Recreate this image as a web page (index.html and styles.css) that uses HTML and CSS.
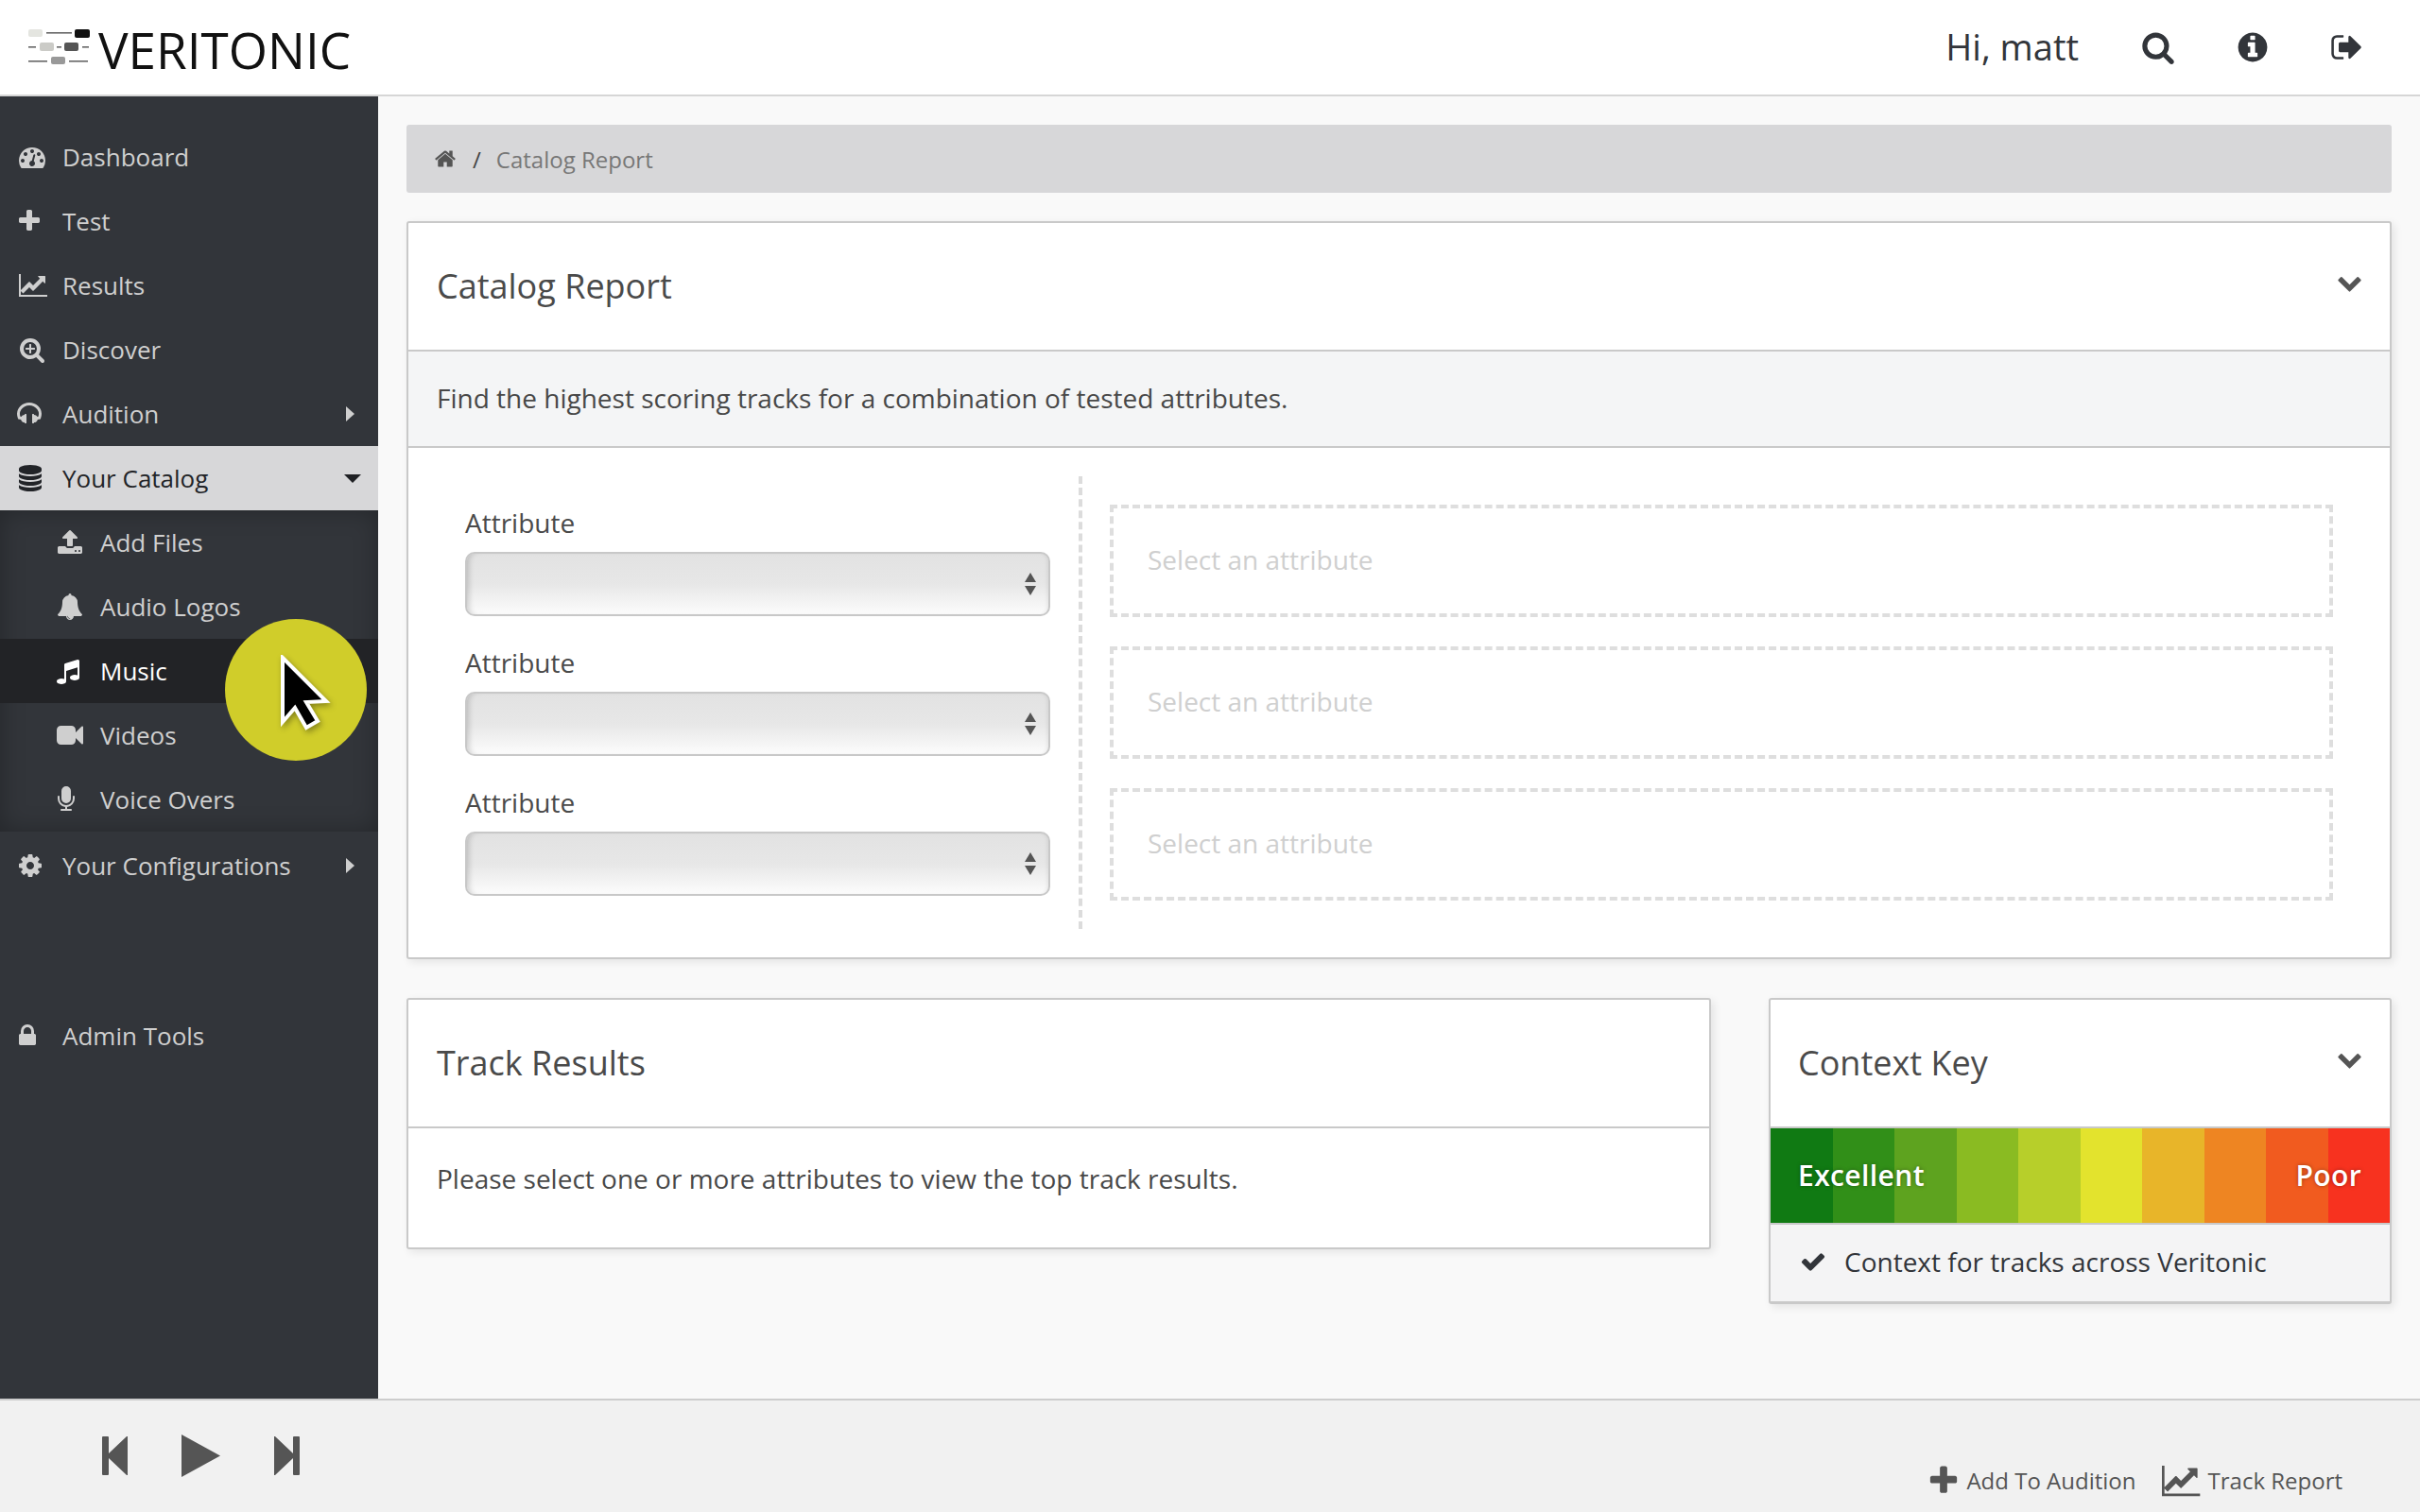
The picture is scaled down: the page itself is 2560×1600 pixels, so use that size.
FILE: index.html
```
<!DOCTYPE html>
<html lang="en">
<head>
<meta charset="utf-8">
<title>Veritonic - Catalog Report</title>
<link rel="stylesheet" href="styles.css">
</head>
<body>
<svg class="sprite" xmlns="http://www.w3.org/2000/svg">
<symbol id="i-plus" viewBox="0 0 1792 1792"><path d="M1600 736v192q0 40-28 68t-68 28h-416v416q0 40-28 68t-68 28h-192q-40 0-68-28t-28-68v-416h-416q-40 0-68-28t-28-68v-192q0-40 28-68t68-28h416v-416q0-40 28-68t68-28h192q40 0 68 28t28 68v416h416q40 0 68 28t28 68z"/></symbol>
<symbol id="i-search" viewBox="0 0 1792 1792"><path d="M1216 832q0-185-131.500-316.500t-316.500-131.500-316.500 131.500-131.500 316.500 131.500 316.500 316.500 131.500 316.500-131.500 131.500-316.500zm512 832q0 52-38 90t-90 38q-54 0-90-38l-343-342q-179 124-399 124-143 0-273.500-55.500t-225-150-150-225-55.500-273.500 55.500-273.500 150-225 225-150 273.500-55.500 273.500 55.500 225 150 150 225 55.500 273.500q0 220-124 399l343 343q37 37 37 90z"/></symbol>
<symbol id="i-check" viewBox="0 0 1792 1792"><path d="M1671 566q0 40-28 68l-724 724-136 136q-28 28-68 28t-68-28l-136-136-362-362q-28-28-28-68t28-68l136-136q28-28 68-28t68 28l294 295 656-657q28-28 68-28t68 28l136 136q28 28 28 68z"/></symbol>
<symbol id="i-chevron" viewBox="0 0 1792 1792"><path d="M1683 808l-742 741q-19 19-45 19t-45-19l-742-741q-19-19-19-45.500t19-45.500l166-165q19-19 45-19t45 19l531 531 531-531q19-19 45-19t45 19l166 165q19 19 19 45.500t-19 45.500z"/></symbol>
<symbol id="i-info" viewBox="0 0 1792 1792"><path d="M1152 1376v-160q0-14-9-23t-23-9h-96v-512q0-14-9-23t-23-9h-320q-14 0-23 9t-9 23v160q0 14 9 23t23 9h96v320h-96q-14 0-23 9t-9 23v160q0 14 9 23t23 9h448q14 0 23-9t9-23zm-128-896v-160q0-14-9-23t-23-9h-192q-14 0-23 9t-9 23v160q0 14 9 23t23 9h192q14 0 23-9t9-23zm640 416q0 209-103 385.500t-279.500 279.500-385.500 103-385.500-103-279.500-279.500-103-385.500 103-385.500 279.500-279.500 385.500-103 385.500 103 279.500 279.500 103 385.500z"/></symbol>
<symbol id="i-signout" viewBox="0 0 1792 1792"><path d="M704 1440q0 4 1 20t.5 26.500-3 23.500-10 19.500-20.500 6.500h-320q-119 0-203.500-84.500t-84.500-203.500v-704q0-119 84.500-203.500t203.500-84.500h320q13 0 22.500 9.500t9.500 22.500q0 4 1 20t.5 26.500-3 23.500-10 19.500-20.500 6.500h-320q-66 0-113 47t-47 113v704q0 66 47 113t113 47h312l11.500 1 11.500 3 8 5.500 7 9 2 13.500zm928-544q0 26-19 45l-544 544q-19 19-45 19t-45-19-19-45v-288h-448q-26 0-45-19t-19-45v-384q0-26 19-45t45-19h448v-288q0-26 19-45t45-19 45 19l544 544q19 19 19 45z"/></symbol>
<symbol id="i-home" viewBox="0 0 1792 1792"><path d="M1472 992v480q0 26-19 45t-45 19h-384v-384h-256v384h-384q-26 0-45-19t-19-45v-480q0-1 .5-3t.5-3l575-474 575 474q1 2 1 6zm223-69l-62 74q-8 9-21 11h-3q-13 0-21-7l-692-577-692 577q-12 8-24 7-13-2-21-11l-62-74q-8-10-7-23.500t11-21.500l719-599q32-26 76-26t76 26l244 204v-195q0-14 9-23t23-9h192q14 0 23 9t9 23v408l219 182q10 8 11 21.500t-7 23.500z"/></symbol>
<symbol id="i-chart" viewBox="0 0 2048 1792"><path d="M1920 1536v128h-1920v-1536h128v1408h1792zm-128-1248v435q0 21-19.500 29.500t-35.500-7.500l-121-121-633 633q-10 10-23 10t-23-10l-233-233-416 416-192-192 585-585q10-10 23-10t23 10l233 233 464-464-121-121q-16-16-7.500-35.500t29.500-19.500h435q14 0 23 9t9 23z"/></symbol>
<symbol id="i-db" viewBox="0 0 1792 1792"><path d="M896 768q237 0 443-43t325-127v170q0 69-103 128t-280 93.500-385 34.500-385-34.500-280-93.500-103-128v-170q119 84 325 127t443 43zm0 768q237 0 443-43t325-127v170q0 69-103 128t-280 93.500-385 34.500-385-34.500-280-93.500-103-128v-170q119 84 325 127t443 43zm0-384q237 0 443-43t325-127v170q0 69-103 128t-280 93.500-385 34.500-385-34.500-280-93.500-103-128v-170q119 84 325 127t443 43zm0-1152q208 0 385 34.500t280 93.500 103 128v128q0 69-103 128t-280 93.500-385 34.500-385-34.500-280-93.500-103-128v-128q0-69 103-128t280-93.500 385-34.500z"/></symbol>
<symbol id="i-video" viewBox="0 0 1792 1792"><path d="M1792 352v1088q0 42-39 59-13 5-25 5-27 0-45-19l-403-403v166q0 119-84.500 203.500t-203.500 84.500h-704q-119 0-203.500-84.500t-84.500-203.500v-704q0-119 84.500-203.500t203.500-84.500h704q119 0 203.500 84.500t84.500 203.500v165l403-402q18-19 45-19 12 0 25 5 39 17 39 59z"/></symbol>
<symbol id="i-lock" viewBox="0 0 1792 1792"><path d="M640 768h512v-192q0-106-75-181t-181-75-181 75-75 181v192zm832 96v576q0 40-28 68t-68 28h-960q-40 0-68-28t-28-68v-576q0-40 28-68t68-28h32v-192q0-184 132-316t316-132 316 132 132 316v192h32q40 0 68 28t28 68z"/></symbol>
<symbol id="i-bell" viewBox="0 0 1792 1792"><path d="M912 1696q0-16-16-16-59 0-101.500-42.500t-42.500-101.500q0-16-16-16t-16 16q0 73 51.500 124.500t124.500 51.500q16 0 16-16zm816-288q0 52-38 90t-90 38h-448q0 106-75 181t-181 75-181-75-75-181h-448q-52 0-90-38t-38-90q50-42 91-88t85-119.500 74.500-158.500 50-206 19.500-260q0-152 117-282.500t307-158.500q-8-19-8-39 0-40 28-68t68-28 68 28 28 68q0 20-8 39 190 28 307 158.500t117 282.500q0 139 19.500 260t50 206 74.500 158.500 85 119.500 91 88z"/></symbol>
<symbol id="i-music" viewBox="0 0 1792 1792"><path d="M1664 224v1120q0 50-34 89t-86 60.500-103.500 32-96.500 10.500-96.500-10.500-103.500-32-86-60.500-34-89 34-89 86-60.500 103.500-32 96.500-10.500q105 0 192 39v-537l-768 237v709q0 50-34 89t-86 60.500-103.500 32-96.500 10.500-96.500-10.500-103.500-32-86-60.500-34-89 34-89 86-60.500 103.500-32 96.500-10.500q105 0 192 39v-967q0-31 19-56.500t49-35.500l832-256q12-4 28-4 40 0 68 28t28 68z"/></symbol>
<symbol id="i-upload" viewBox="0 0 1792 1792"><path d="M1344 1472q0-26-19-45t-45-19-45 19-19 45 19 45 45 19 45-19 19-45zm256 0q0-26-19-45t-45-19-45 19-19 45 19 45 45 19 45-19 19-45zm128-224v320q0 40-28 68t-68 28h-1472q-40 0-68-28t-28-68v-320q0-40 28-68t68-28h427q21 56 70.500 92t110.500 36h256q61 0 110.500-36t70.500-92h427q40 0 68 28t28 68zm-325-648q-17 40-59 40h-256v448q0 26-19 45t-45 19h-256q-26 0-45-19t-19-45v-448h-256q-42 0-59-40-17-39 14-69l448-448q18-19 45-19t45 19l448 448q31 30 14 69z"/></symbol>
<symbol id="i-headphones" viewBox="0 0 1792 1792"><path d="M1664 886q0 166-60 314l-20 49-185 33q-22 83-90.500 136.500t-156.500 53.500v32q0 14-9 23t-23 9h-64q-14 0-23-9t-9-23v-576q0-14 9-23t23-9h64q14 0 23 9t9 23v32q71 0 130 35.500t93 95.500l68-12q29-95 29-193 0-148-88-279t-236.500-209-315.500-78-315.500 78-236.500 209-88 279q0 98 29 193l68 12q34-60 93-95.500t130-35.500v-32q0-14 9-23t23-9h64q14 0 23 9t9 23v576q0 14-9 23t-23 9h-64q-14 0-23-9t-9-23v-32q-88 0-156.500-53.500t-90.500-136.500l-185-33-20-49q-60-148-60-314 0-151 67-291t179-242.500 266-163.500 320-61 320 61 266 163.500 179 242.500 67 291z"/></symbol>
<symbol id="i-cog" viewBox="0 0 1792 1792"><path d="M1152 896q0-106-75-181t-181-75-181 75-75 181 75 181 181 75 181-75 75-181zm512-109v222q0 12-8 23t-20 13l-185 28q-19 54-39 91 35 50 107 138 10 12 10 25t-9 23q-27 37-99 108t-94 71q-12 0-26-9l-138-108q-44 23-91 38-16 136-29 186-7 28-36 28h-222q-14 0-24.500-8.500t-11.500-21.500l-28-184q-49-16-90-37l-141 107q-10 9-25 9-14 0-25-11-126-114-165-168-7-10-7-23 0-12 8-23 15-21 51-66.500t54-70.500q-27-50-41-99l-183-27q-13-2-21-12.500t-8-23.500v-222q0-12 8-23t19-13l186-28q14-46 39-92-40-57-107-138-10-12-10-24 0-10 9-23 26-36 98.500-107.500t94.500-71.500q13 0 26 10l138 107q44-23 91-38 16-136 29-186 7-28 36-28h222q14 0 24.500 8.500t11.500 21.500l28 184q49 16 90 37l142-107q9-9 24-9 13 0 25 10 129 119 165 170 7 8 7 22 0 12-8 23-15 21-51 66.500t-54 70.500q26 50 41 98l183 28q13 2 21 12.500t8 23.500z"/></symbol>
<symbol id="i-mic" viewBox="0 0 1792 1792"><path d="M1472 704v128q0 221-147.500 384.500t-364.500 187.500v132h256q26 0 45 19t19 45-19 45-45 19h-640q-26 0-45-19t-19-45 19-45 45-19h256v-132q-217-24-364.500-187.500t-147.500-384.500v-128q0-26 19-45t45-19 45 19 19 45v128q0 185 131.500 316.500t316.500 131.500 316.500-131.500 131.500-316.500v-128q0-26 19-45t45-19 45 19 19 45zm-256-384v512q0 132-94 226t-226 94-226-94-94-226v-512q0-132 94-226t226-94 226 94 94 226z"/></symbol>
<symbol id="i-tach" viewBox="0 0 1792 1792"><path d="M384 1152q0-53-37.500-90.500t-90.500-37.500-90.500 37.500-37.500 90.500 37.500 90.500 90.500 37.500 90.500-37.500 37.500-90.500zm192-448q0-53-37.500-90.500t-90.500-37.500-90.500 37.500-37.500 90.500 37.500 90.500 90.500 37.500 90.500-37.500 37.500-90.500zm428 481l101-382q6-26-7.500-48.500t-38.500-29.500-48 6.500-30 39.500l-101 382q-60 5-107 43.500t-63 98.500q-20 77 20 146t117 89 146-20 89-117q16-60-6-117t-72-91zm660-33q0-53-37.500-90.500t-90.500-37.500-90.500 37.500-37.500 90.500 37.500 90.500 90.500 37.500 90.500-37.500 37.500-90.500zm-640-640q0-53-37.500-90.500t-90.500-37.500-90.500 37.500-37.500 90.500 37.500 90.500 90.500 37.500 90.500-37.500 37.500-90.500zm448 192q0-53-37.500-90.500t-90.500-37.500-90.500 37.500-37.500 90.500 37.500 90.500 90.500 37.500 90.500-37.500 37.500-90.500zm320 448q0 261-141 483-19 29-54 29h-1402q-35 0-54-29-141-221-141-483 0-182 71-348t191-286 286-191 348-71 348 71 286 191 191 286 71 348z"/></symbol>
<symbol id="i-searchplus" viewBox="0 0 1792 1792"><path d="M1088 800v64q0 13-9.500 22.500t-22.500 9.500h-224v224q0 13-9.500 22.500t-22.500 9.500h-64q-13 0-22.500-9.500t-9.500-22.500v-224h-224q-13 0-22.500-9.500t-9.500-22.500v-64q0-13 9.500-22.500t22.500-9.500h224v-224q0-13 9.500-22.500t22.500-9.500h64q13 0 22.500 9.500t9.500 22.500v224h224q13 0 22.500 9.500t9.500 22.500zm128 32q0-185-131.500-316.500t-316.500-131.500-316.500 131.500-131.500 316.500 131.500 316.500 316.500 131.500 316.500-131.500 131.500-316.500zm512 832q0 53-37.500 90.500t-90.500 37.500q-54 0-90-38l-343-342q-179 124-399 124-143 0-273.500-55.500t-225-150-150-225-55.500-273.500 55.500-273.500 150-225 225-150 273.500-55.500 273.500 55.500 225 150 150 225 55.500 273.500q0 220-124 399l343 343q37 37 37 90z"/></symbol>
</svg>

<header class="topbar">
  <div class="brand">
    <svg class="brand-mark" viewBox="0 0 66 38" aria-hidden="true">
      <rect x="0" y="0" width="15" height="8" rx="2" fill="#e4e5e0"/>
      <rect x="19" y="3" width="27" height="1.6" fill="#666"/>
      <rect x="49" y="0" width="16" height="9" rx="2" fill="#111"/>
      <rect x="0" y="18" width="8" height="1.6" fill="#666"/>
      <rect x="12" y="14" width="15" height="9" rx="2" fill="#cbcbc7"/>
      <rect x="30" y="18" width="5" height="1.6" fill="#666"/>
      <rect x="38" y="14" width="15" height="9" rx="2" fill="#555"/>
      <rect x="57" y="18" width="7" height="1.6" fill="#666"/>
      <rect x="0" y="33" width="20" height="1.6" fill="#666"/>
      <rect x="24" y="29" width="15" height="8" rx="2" fill="#999"/>
      <rect x="43" y="33" width="20" height="1.6" fill="#666"/>
    </svg>
    <span class="brand-name">VERITONIC</span>
  </div>
  <div class="top-actions">
    <span class="greeting">Hi, matt</span>
    <svg class="top-icon"><use href="#i-search"/></svg>
    <svg class="top-icon"><use href="#i-info"/></svg>
    <svg class="top-icon"><use href="#i-signout"/></svg>
  </div>
</header>

<div class="shell">
  <nav class="sidebar">
    <ul class="nav">
      <li class="nav-item"><svg class="nav-icon"><use href="#i-tach"/></svg><span class="nav-label">Dashboard</span></li>
      <li class="nav-item"><svg class="nav-icon shift3"><use href="#i-plus"/></svg><span class="nav-label">Test</span></li>
      <li class="nav-item"><svg class="nav-icon wide"><use href="#i-chart"/></svg><span class="nav-label">Results</span></li>
      <li class="nav-item"><svg class="nav-icon"><use href="#i-searchplus"/></svg><span class="nav-label">Discover</span></li>
      <li class="nav-item"><svg class="nav-icon shift2"><use href="#i-headphones"/></svg><span class="nav-label">Audition</span><i class="caret-right"></i></li>
      <li class="nav-item active"><svg class="nav-icon shift2"><use href="#i-db"/></svg><span class="nav-label">Your Catalog</span><i class="caret-down"></i></li>
      <li>
        <ul class="subnav">
          <li class="nav-item sub"><svg class="nav-icon"><use href="#i-upload"/></svg><span class="nav-label">Add Files</span></li>
          <li class="nav-item sub"><svg class="nav-icon"><use href="#i-bell"/></svg><span class="nav-label">Audio Logos</span></li>
          <li class="nav-item sub current"><svg class="nav-icon shift2"><use href="#i-music"/></svg><span class="nav-label">Music</span></li>
          <li class="nav-item sub"><svg class="nav-icon"><use href="#i-video"/></svg><span class="nav-label">Videos</span></li>
          <li class="nav-item sub"><svg class="nav-icon shift4"><use href="#i-mic"/></svg><span class="nav-label">Voice Overs</span></li>
        </ul>
      </li>
      <li class="nav-item config"><svg class="nav-icon shift2"><use href="#i-cog"/></svg><span class="nav-label">Your Configurations</span><i class="caret-right"></i></li>
      <li class="nav-item admin"><svg class="nav-icon shift5"><use href="#i-lock"/></svg><span class="nav-label">Admin Tools</span></li>
    </ul>
    <div class="cursor-halo"></div>
    <svg class="cursor" viewBox="0 0 60 84" aria-hidden="true">
      <path d="M3 3 L49 49 L28 50 L40 70 L28 77 L16 56 L3 71 Z" fill="#000" stroke="#fff" stroke-width="4" stroke-linejoin="miter"/>
    </svg>
  </nav>

  <main class="content">
    <div class="breadcrumb">
      <svg class="crumb-home"><use href="#i-home"/></svg>
      <span class="crumb-sep">/</span>
      <span class="crumb-current">Catalog Report</span>
    </div>

    <section class="panel report">
      <div class="panel-head">
        <h2 class="panel-title">Catalog Report</h2>
        <svg class="chevron"><use href="#i-chevron"/></svg>
      </div>
      <p class="panel-desc">Find the highest scoring tracks for a combination of tested attributes.</p>
      <div class="report-body">
        <div class="attr-col">
          <div class="attr-group">
            <label class="attr-label">Attribute</label>
            <div class="select-wrap"><select class="attr-select"></select><span class="select-arrows"><i class="up"></i><i class="down"></i></span></div>
          </div>
          <div class="attr-group">
            <label class="attr-label">Attribute</label>
            <div class="select-wrap"><select class="attr-select"></select><span class="select-arrows"><i class="up"></i><i class="down"></i></span></div>
          </div>
          <div class="attr-group">
            <label class="attr-label">Attribute</label>
            <div class="select-wrap"><select class="attr-select"></select><span class="select-arrows"><i class="up"></i><i class="down"></i></span></div>
          </div>
        </div>
        <div class="drop-col">
          <div class="drop-box">Select an attribute</div>
          <div class="drop-box">Select an attribute</div>
          <div class="drop-box">Select an attribute</div>
        </div>
      </div>
    </section>

    <div class="lower">
      <section class="panel tracks">
        <div class="panel-head"><h2 class="panel-title">Track Results</h2></div>
        <p class="tracks-msg">Please select one or more attributes to view the top track results.</p>
      </section>
      <section class="panel context">
        <div class="panel-head context-head">
          <h2 class="panel-title">Context Key</h2>
          <svg class="chevron"><use href="#i-chevron"/></svg>
        </div>
        <div class="scale">
          <i class="s1"></i><i class="s2"></i><i class="s3"></i><i class="s4"></i><i class="s5"></i><i class="s6"></i><i class="s7"></i><i class="s8"></i><i class="s9"></i><i class="s10"></i>
          <span class="scale-text"><b>Excellent</b><b>Poor</b></span>
        </div>
        <div class="context-foot"><svg class="check"><use href="#i-check"/></svg><span>Context for tracks across Veritonic</span></div>
      </section>
    </div>
  </main>
</div>

<footer class="player">
  <div class="controls">
    <svg class="ctl step" viewBox="0 0 27 41"><path d="M1 0h5q1 0 1 1v17L26 0h1v41h-1L7 23v17q0 1-1 1H1q-1 0-1-1V1q0-1 1-1z"/></svg>
    <svg class="ctl play" viewBox="0 0 41 45"><path d="M0 0L41 22.500 0 45z"/></svg>
    <svg class="ctl step" viewBox="0 0 27 41"><path d="M26 0h-5q-1 0-1 1v17L1 0H0v41h1l19-18v17q0 1 1 1h5q1 0 1-1V1q0-1-1-1z"/></svg>
  </div>
  <div class="player-actions">
    <span class="action"><svg class="act-plus"><use href="#i-plus"/></svg>Add To Audition</span>
    <span class="action"><svg class="act-chart"><use href="#i-chart"/></svg>Track Report</span>
  </div>
</footer>
</body>
</html>
```
FILE: styles.css
```
* { box-sizing: border-box; }
html, body { margin: 0; padding: 0; }
body {
  width: 2560px;
  height: 1600px;
  overflow: hidden;
  background: #f9f9f9;
  color: #4a4a4a;
  font-family: "Open Sans", "Noto Sans", sans-serif;
  font-size: 26px;
  display: flex;
  flex-direction: column;
}
ul { list-style: none; margin: 0; padding: 0; }
.sprite { position: absolute; width: 0; height: 0; }
svg { fill: currentColor; display: block; flex: none; }

.topbar {
  height: 102px;
  flex: none;
  background: #fff;
  border-bottom: 2px solid #d6d6d6;
  display: flex;
  align-items: center;
  justify-content: space-between;
  padding: 0 59px 0 30px;
}
.brand { display: flex; align-items: center; gap: 8px; color: #111; }
.brand-mark { width: 66px; height: 38px; }
.brand-name { font-size: 53px; font-weight: 400; line-height: 60px; padding-top: 6px; }
.top-actions { display: flex; align-items: center; color: #32353a; }
.greeting { font-size: 38px; margin-right: 66px; margin-top: -3px; }
.top-icon { width: 36px; height: 36px; margin-left: 64px; }
.top-icon:first-of-type { margin-left: 0; }

.shell { flex: 1; display: flex; min-height: 0; }
.sidebar {
  position: relative;
  width: 400px;
  flex: none;
  background: #32353a;
  color: #cfcfcf;
  padding-top: 30px;
}
.nav-item {
  height: 68px;
  display: flex;
  align-items: center;
  padding-left: 20px;
  position: relative;
}
.nav-icon { width: 28px; height: 28px; margin-right: 18px; }
.nav-icon.wide { width: 32px; margin-right: 14px; }
.nav-icon.shift2 { margin-left: -2px; margin-right: 20px; }
.nav-icon.shift3 { margin-left: -3px; margin-right: 21px; }
.nav-icon.shift4 { margin-left: -4px; margin-right: 22px; }
.nav-icon.shift5 { margin-left: -5px; margin-right: 23px; }
.nav-label { line-height: 1; }
.caret-right {
  position: absolute; right: 25px; top: 50%; margin-top: -8px;
  border-left: 9px solid #cfcfcf;
  border-top: 8px solid transparent;
  border-bottom: 8px solid transparent;
}
.caret-down {
  position: absolute; right: 18px; top: 50%; margin-top: -4px;
  border-top: 9px solid #1f2024;
  border-left: 9px solid transparent;
  border-right: 9px solid transparent;
}
.nav-item.active { background: #d7d7d9; color: #222428; }
.subnav { box-shadow: inset 0 0 26px rgba(0,0,0,.28); }
.nav-item.sub { padding-left: 60px; }
.nav-item.current { background: #222326; color: #fff; }
.nav-item.config { height: 72px; }
.nav-item.admin { margin-top: 110px; }

.cursor-halo {
  position: absolute;
  left: 238px;
  top: 553px;
  width: 150px;
  height: 150px;
  border-radius: 50%;
  background: #d0cd2a;
}
.cursor {
  position: absolute;
  left: 296px;
  top: 591px;
  width: 60px;
  height: 84px;
  filter: drop-shadow(2px 3px 3px rgba(0,0,0,.35));
}

.content { flex: 1; min-width: 0; padding: 30px 30px 0; }
.breadcrumb {
  height: 72px;
  background: #d7d7d9;
  border-radius: 3px;
  display: flex;
  align-items: center;
  padding-left: 29px;
  margin-bottom: 30px;
  font-size: 24px;
  color: #777;
}
.crumb-home { width: 24px; height: 24px; color: #555; }
.crumb-sep { margin: 0 16px 0 17px; color: #444; }

.panel {
  background: #fff;
  border: 2px solid #c9c9c9;
  border-radius: 3px;
  box-shadow: 3px 3px 10px rgba(0,0,0,.09);
}
.report { height: 781px; }
.panel-head {
  height: 136px;
  border-bottom: 2px solid #c9c9c9;
  display: flex;
  align-items: center;
  justify-content: space-between;
  padding: 0 30px 2px;
}
.panel-title { margin: 0; font-size: 36px; font-weight: 400; color: #4a4a4a; }
.chevron { width: 27px; height: 27px; color: #555; margin-right: -1px; margin-top: -8px; }
.panel-desc {
  margin: 0;
  height: 102px;
  display: flex;
  align-items: center;
  padding: 0 30px 3px;
  background: #f4f5f6;
  border-bottom: 2px solid #c9c9c9;
  font-size: 28px;
  color: #484848;
}
.report-body { display: flex; padding: 30px 60px 30px 60px; height: 539px; }
.attr-col { width: 653px; flex: none; padding: 30px 30px 0 0; border-right: 4px dashed #dcdcdc; }
.attr-group { margin-bottom: 30px; }
.attr-label { display: block; line-height: 38px; margin-bottom: 12px; font-size: 28px; color: #4a4a4a; }
.select-wrap { position: relative; }
.attr-select {
  display: block;
  width: 100%;
  height: 68px;
  appearance: none;
  -webkit-appearance: none;
  border: 2px solid #c8c8c8;
  border-radius: 10px;
  background: linear-gradient(#e2e2e2 0%, #e7e7e7 50%, #fcfcfc 100%);
  box-shadow: inset 6px 0 6px -4px rgba(0,0,0,.18), inset -4px 0 4px -3px rgba(0,0,0,.08);
}
.select-arrows {
  position: absolute; right: 15px; top: 22px;
  display: flex; flex-direction: column; gap: 4px;
}
.select-arrows i { display: block; border-left: 6px solid transparent; border-right: 6px solid transparent; }
.select-arrows .up { border-bottom: 10px solid #555; }
.select-arrows .down { border-top: 10px solid #555; }
.drop-col { flex: 1; min-width: 0; padding: 30px 0 0 29px; display: flex; flex-direction: column; gap: 31px; }
.drop-box {
  height: 119px;
  flex: none;
  border: 4px dashed #dedede;
  display: flex;
  align-items: center;
  padding: 0 0 3px 36px;
  color: #cfcfcf;
  font-size: 28px;
}

.lower { display: flex; align-items: flex-start; gap: 61px; margin-top: 41px; }
.tracks { width: 1380px; flex: none; height: 266px; }
.tracks-msg { margin: 0; padding: 0 30px 3px; height: 108px; display: flex; align-items: center; font-size: 28px; color: #484848; }
.context { flex: 1; min-width: 0; height: 324px; border-bottom-width: 3px; }
.context-head { border-bottom: 0; height: 134px; padding: 0 30px 2px 29px; }
.scale { position: relative; display: flex; height: 104px; border-top: 2px solid #c9c9c9; border-bottom: 2px solid #c9c9c9; }
.scale i { flex: 1; }
.s1 { background: #107a13; } .s2 { background: #318f18; } .s3 { background: #5ea31f; } .s4 { background: #8abb22; } .s5 { background: #b7cf2a; }
.s6 { background: #e3e32d; } .s7 { background: #e8b529; } .s8 { background: #ee8522; } .s9 { background: #f15b1f; } .s10 { background: #f7321f; }
.scale-text {
  position: absolute; inset: 0;
  display: flex; align-items: center; justify-content: space-between;
  padding: 0 30px 2px 29px;
  color: #fff;
  font-size: 30px;
  letter-spacing: .4px;
  text-shadow: 0 0 4px rgba(0,0,0,.35);
}
.scale-text b { font-weight: 600; }
.context-foot {
  height: 81px;
  background: #f4f4f5;
  display: flex;
  align-items: center;
  padding: 0 0 3px 31px;
  font-size: 28px;
  color: #32353a;
}
.check { width: 28px; height: 28px; margin-right: 19px; }

.player {
  height: 120px;
  flex: none;
  background: #f1f1f1;
  border-top: 2px solid #cdcdcd;
  display: flex;
  justify-content: space-between;
  padding: 0 82px 14px 108px;
  color: #555;
}
.controls { display: flex; align-items: center; gap: 57px; padding-top: 13px; }
.ctl.step { width: 27px; height: 41px; }
.ctl.play { width: 41px; height: 45px; }
.player-actions { align-self: flex-end; display: flex; gap: 27px; }
.action { display: flex; align-items: center; line-height: 34px; font-size: 24px; }
.act-plus { width: 36px; height: 36px; margin-right: 6px; }
.act-chart { width: 43px; height: 38px; margin-right: 6px; }
```
